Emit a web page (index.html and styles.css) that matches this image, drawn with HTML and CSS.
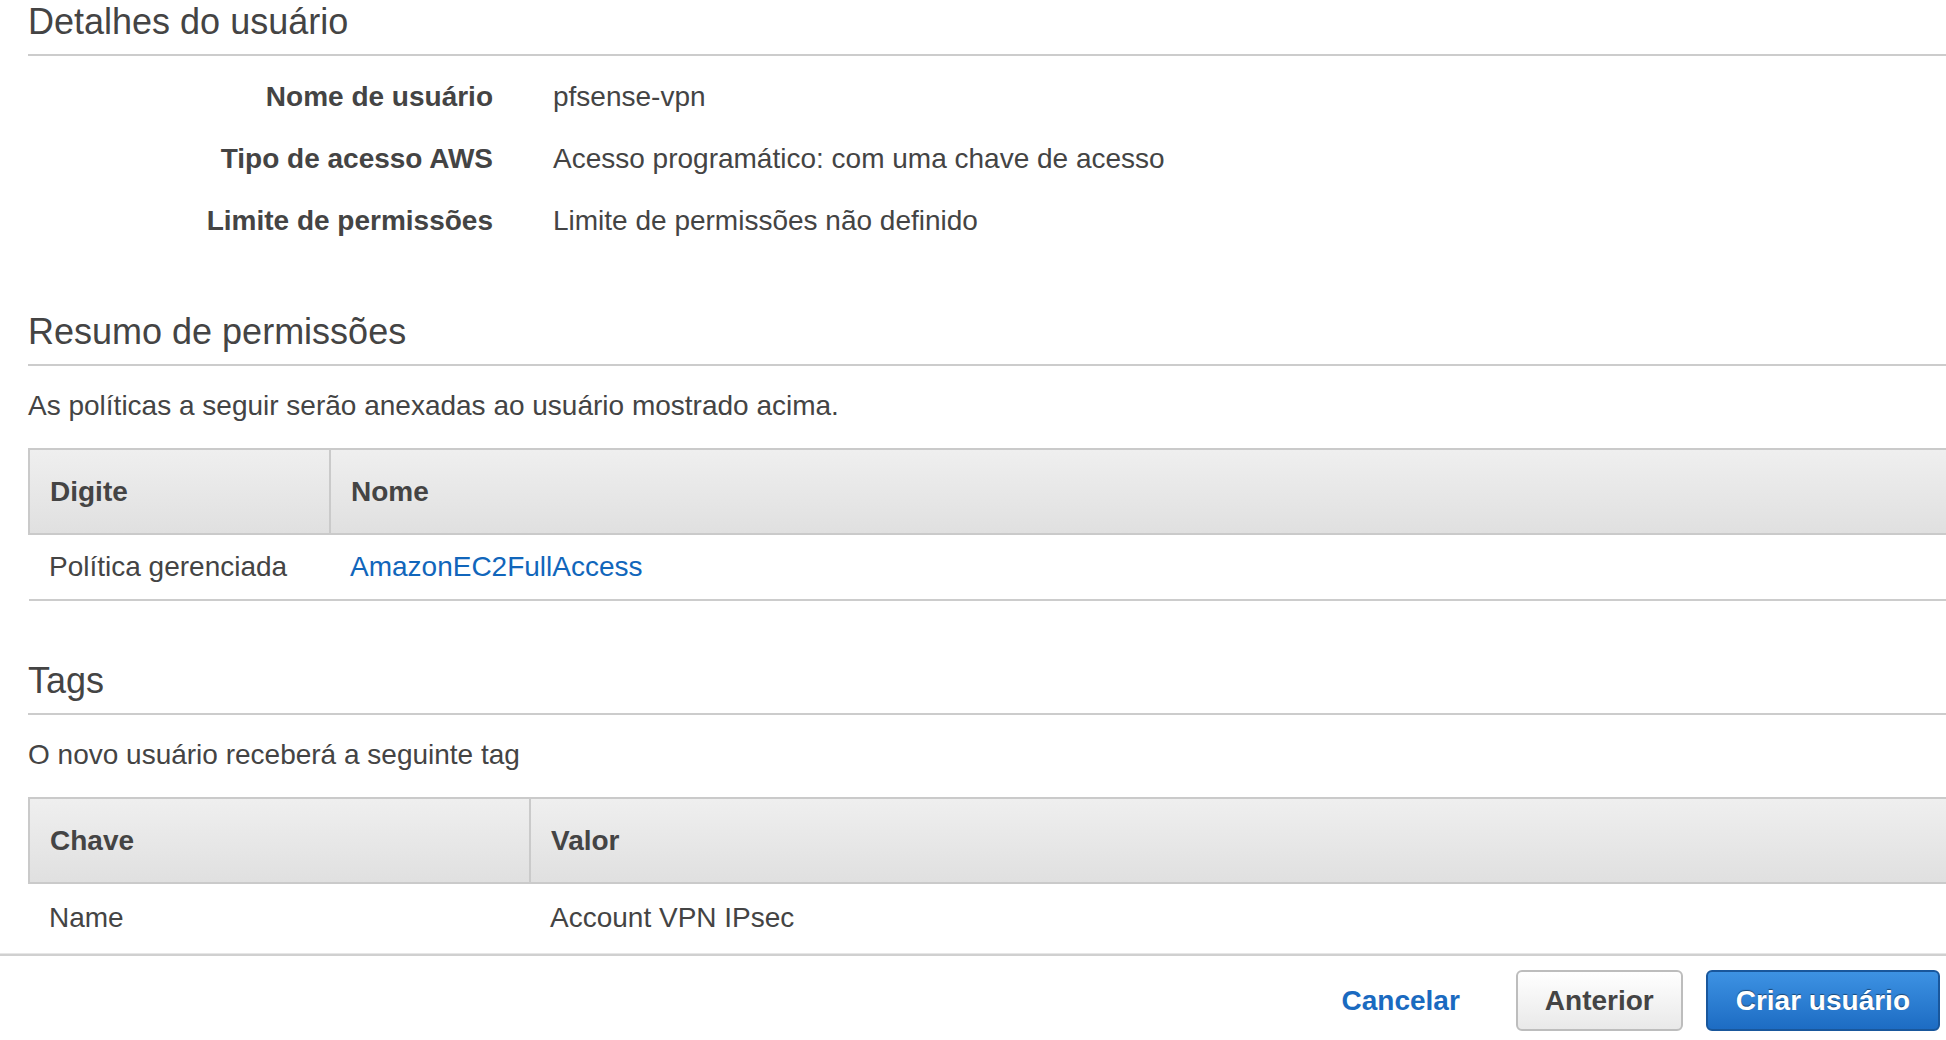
FILE: index.html
```html
<!DOCTYPE html>
<html lang="pt-BR">
<head>
<meta charset="utf-8">
<title>Revisar usuário</title>
<link rel="stylesheet" href="styles.css">
</head>
<body>
<div class="screen">
  <main class="content">
    <section class="section">
      <h2 class="section-title">Detalhes do usuário</h2>
      <dl class="details">
        <dt>Nome de usuário</dt><dd>pfsense-vpn</dd>
        <dt>Tipo de acesso AWS</dt><dd>Acesso programático: com uma chave de acesso</dd>
        <dt>Limite de permissões</dt><dd>Limite de permissões não definido</dd>
      </dl>
    </section>

    <section class="section section-gap">
      <h2 class="section-title">Resumo de permissões</h2>
      <p class="intro">As políticas a seguir serão anexadas ao usuário mostrado acima.</p>
      <table class="grid grid-policies">
        <thead>
          <tr><th class="col-first">Digite</th><th>Nome</th></tr>
        </thead>
        <tbody>
          <tr><td>Política gerenciada</td><td><a class="link" href="#">AmazonEC2FullAccess</a></td></tr>
        </tbody>
      </table>
    </section>

    <section class="section section-gap">
      <h2 class="section-title">Tags</h2>
      <p class="intro">O novo usuário receberá a seguinte tag</p>
      <table class="grid grid-tags">
        <thead>
          <tr><th class="col-first">Chave</th><th>Valor</th></tr>
        </thead>
        <tbody>
          <tr class="last-row"><td>Name</td><td>Account VPN IPsec</td></tr>
        </tbody>
      </table>
    </section>
  </main>

  <footer class="footer">
    <a class="btn-link" href="#">Cancelar</a>
    <button class="btn btn-secondary" type="button">Anterior</button>
    <button class="btn btn-primary" type="button">Criar usuário</button>
  </footer>
</div>
</body>
</html>
```

FILE: styles.css
```css
html, body {
  margin: 0;
  padding: 0;
  background: #ffffff;
}

body {
  font-family: "Liberation Sans", Arial, Helvetica, sans-serif;
  color: #444444;
  font-size: 28px;
  overflow: hidden;
}

.screen {
  height: 1040px;
  display: flex;
  flex-direction: column;
}

.content {
  flex: 1;
  min-height: 0;
  overflow: hidden;
  padding-left: 28px;
}

.section-gap {
  margin-top: 58px;
}

.section-title {
  margin: 0;
  font-size: 36px;
  font-weight: normal;
  line-height: 44px;
  color: #444444;
  padding-bottom: 10px;
  border-bottom: 2px solid #cccccc;
}

.details {
  margin: 10px 0 0 0;
  display: grid;
  grid-template-columns: 465px 1fr;
  column-gap: 60px;
  grid-auto-rows: 62px;
  align-items: center;
}

.details dt {
  text-align: right;
  font-weight: bold;
}

.details dd {
  margin: 0;
}

.intro {
  margin: 20px 0 22px 0;
  line-height: 40px;
}

.grid {
  width: 100%;
  border-collapse: collapse;
  table-layout: fixed;
}

.grid th {
  text-align: left;
  font-weight: bold;
  height: 83px;
  padding: 0 20px;
  background: linear-gradient(#efefef, #e0e0e0);
  border-top: 2px solid #cacaca;
  border-bottom: 2px solid #cacaca;
  border-left: 2px solid #cacaca;
}

.grid td {
  height: 64px;
  padding: 0 20px;
  border-bottom: 2px solid #cccccc;
}

.grid-policies .col-first {
  width: 259px;
}

.grid-tags .col-first {
  width: 459px;
}

.grid-tags .last-row td {
  border-bottom: none;
  height: 68px;
}

.link {
  color: #1166bb;
  text-decoration: none;
}

.footer {
  flex: none;
  height: 70px;
  border-top: 2px solid #d0d0d0;
  box-shadow: 0 -1px 0 #e6e6e6;
  display: flex;
  justify-content: flex-end;
  align-items: flex-start;
  padding: 14px 6px 0 0;
}

.btn-link {
  color: #1a6ac0;
  font-weight: bold;
  text-decoration: none;
  line-height: 61px;
  margin-right: 56px;
}

.btn {
  font-family: "Liberation Sans", Arial, Helvetica, sans-serif;
  font-size: 28px;
  font-weight: bold;
  height: 61px;
  border-radius: 6px;
  padding: 0 27px;
  cursor: pointer;
}

.btn-secondary {
  color: #444444;
  background: linear-gradient(#ffffff, #e9e9e9);
  border: 2px solid #bdbdbd;
  margin-right: 23px;
}

.btn-primary {
  color: #ffffff;
  background: linear-gradient(#3d92e3, #1d6cc3);
  border: 2px solid #19579c;
  text-shadow: 0 -1px 1px rgba(0,0,0,0.45);
  padding: 0 28px;
}
```
